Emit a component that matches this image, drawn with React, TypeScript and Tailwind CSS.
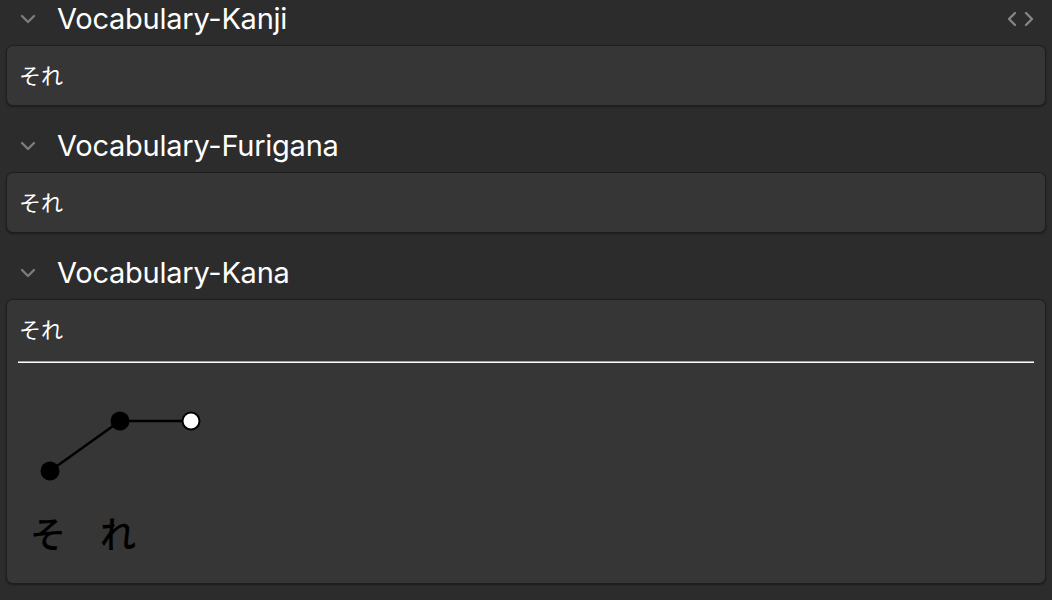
const jp = { fontFamily: '"Noto Sans CJK JP", sans-serif' };
const ui = { fontFamily: 'Inter, "Noto Sans", sans-serif' };

const Chevron = ({ d, w, h }: { d: string; w: number; h: number }) => (
    <svg width={w} height={h} viewBox={`0 0 ${w} ${h}`} fill="none" stroke="currentColor" strokeWidth="2.4" strokeLinecap="round" strokeLinejoin="round">
        <path d={d} />
    </svg>
);

const Header = ({ title, code, first }: { title: string; code?: boolean; first?: boolean }) => (
    <div className={`flex items-center h-[52px] pl-[20px] pr-[18px] ${first ? "-mt-[8px]" : ""}`}>
        <span className="text-[#7c7c7c] w-[16px] flex">
            <Chevron d="M2 2 L8 8 L14 2" w={16} h={10} />
        </span>
        <span className="ml-[21px] text-[29px] text-white tracking-[-0.25px]" style={ui}>{title}</span>
        {code && (
            <div className="ml-auto flex items-center gap-[7px] text-[#858585]">
                <Chevron d="M8 2 L2 8 L8 14" w={10} h={16} />
                <Chevron d="M2 2 L8 8 L2 14" w={10} h={16} />
            </div>
        )}
    </div>
);

const Card = ({ children }: { children: React.ReactNode }) => (
    <div className="mx-[6px] bg-[#363636] rounded-[7px] border border-[#1e1e1e] shadow-[0_1px_2px_rgba(0,0,0,0.4)]">
        {children}
    </div>
);

const Field = ({ text }: { text: string }) => (
    <div className="px-[12px] pt-[13px] pb-[16px] text-[22px] leading-[30px] text-white" style={jp}>{text}</div>
);

const Pitch = () => (
    <div className="relative h-[220px]">
        <svg className="absolute left-0 top-0" width="220" height="140">
            <line x1="43" y1="108" x2="113" y2="58" stroke="black" strokeWidth="2.5" />
            <line x1="113" y1="58" x2="184" y2="58" stroke="black" strokeWidth="2.5" />
            <circle cx="43" cy="108" r="9.5" fill="black" />
            <circle cx="113" cy="58" r="9.5" fill="black" />
            <circle cx="184" cy="58" r="8.5" fill="white" stroke="black" strokeWidth="2" />
        </svg>
        <div className="absolute left-[23px] top-[147px] flex gap-[34px] text-[36px] leading-[44px] font-medium text-black" style={jp}>
            <span>そ</span>
            <span>れ</span>
        </div>
    </div>
);

export default function App() {
    return (
        <div className="w-[1052px] h-[600px] bg-[#2c2c2c] pt-[1px] overflow-hidden">
            <Header title="Vocabulary-Kanji" code first />
            <Card><Field text="それ" /></Card>
            <div className="h-[14px]" />
            <Header title="Vocabulary-Furigana" />
            <Card><Field text="それ" /></Card>
            <div className="h-[14px]" />
            <Header title="Vocabulary-Kana" />
            <Card>
                <Field text="それ" />
                <div className="mx-[11px] mt-[2px] border-t border-t-[#a0a0a0] border-b border-b-white" />
                <Pitch />
            </Card>
        </div>
    );
}
